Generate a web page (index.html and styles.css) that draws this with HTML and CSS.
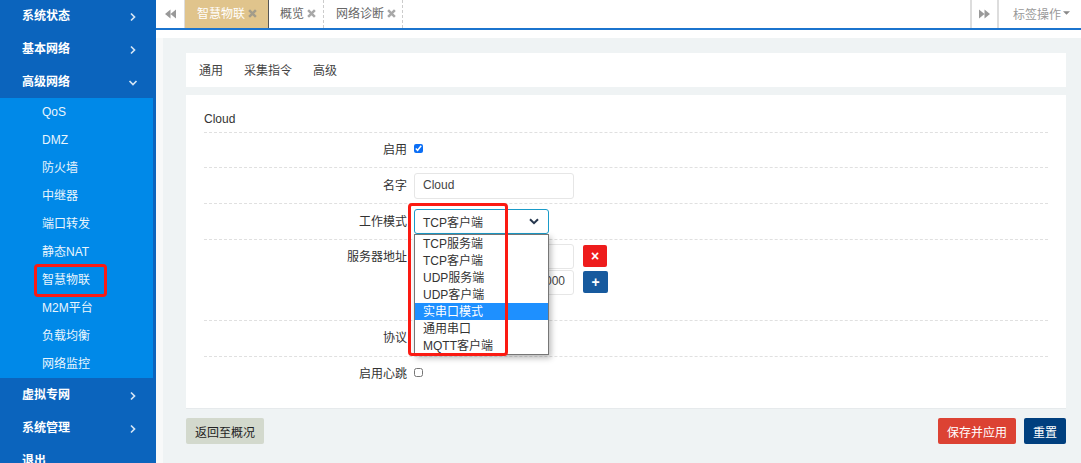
FILE: index.html
```html
<!DOCTYPE html>
<html lang="zh-CN">
<head>
<meta charset="utf-8">
<title>智慧物联</title>
<link rel="stylesheet" href="styles.css">
</head>
<body>
<div class="app">
  <nav class="sidebar">
    <div class="nav-item"><span>系统状态</span><svg class="chev" viewBox="0 0 8 10"><path d="M2 1.5 5.5 5 2 8.5"/></svg></div>
    <div class="nav-item"><span>基本网络</span><svg class="chev" viewBox="0 0 8 10"><path d="M2 1.5 5.5 5 2 8.5"/></svg></div>
    <div class="nav-item"><span>高级网络</span><svg class="chev" viewBox="0 0 10 8"><path d="M1.5 2 5 5.5 8.5 2"/></svg></div>
    <ul class="submenu">
      <li>QoS</li><li>DMZ</li><li>防火墙</li><li>中继器</li><li>端口转发</li><li>静态NAT</li><li>智慧物联</li><li>M2M平台</li><li>负载均衡</li><li>网络监控</li>
    </ul>
    <div class="nav-item"><span>虚拟专网</span><svg class="chev" viewBox="0 0 8 10"><path d="M2 1.5 5.5 5 2 8.5"/></svg></div>
    <div class="nav-item"><span>系统管理</span><svg class="chev" viewBox="0 0 8 10"><path d="M2 1.5 5.5 5 2 8.5"/></svg></div>
    <div class="nav-item"><span>退出</span></div>
    <div class="mark mark-nav"></div>
  </nav>
  <main class="main">
    <header class="tabbar">
      <div class="tab-arrow tab-arrow-left"><svg viewBox="0 0 12 10"><path d="M6 0v10L0 5zM12 0v10L6 5z"/></svg></div>
      <div class="tab tab-active">智慧物联<svg class="close" viewBox="0 0 8 8"><path d="M1 1l6 6M7 1 1 7"/></svg></div>
      <div class="tab tab-plain">概览<svg class="close" viewBox="0 0 8 8"><path d="M1 1l6 6M7 1 1 7"/></svg></div>
      <div class="tab tab-dashed">网络诊断<svg class="close" viewBox="0 0 8 8"><path d="M1 1l6 6M7 1 1 7"/></svg></div>
      <div class="tab-spacer"></div>
      <div class="tab-arrow tab-arrow-right"><svg viewBox="0 0 12 10"><path d="M0 0v10l6-5zM6 0v10l6-5z"/></svg></div>
      <div class="tab-actions">标签操作<svg class="caret" viewBox="0 0 8 4"><path d="M0 0h8L4 4z"/></svg></div>
    </header>
    <div class="page">
      <section class="subtabs"><span>通用</span><span>采集指令</span><span>高级</span></section>
      <section class="panel">
        <div class="panel-title">Cloud</div>
        <div class="row row-check"><label class="lbl">启用</label><input class="check" type="checkbox" checked></div>
        <div class="row row-field"><label class="lbl">名字</label><div class="field field-name">Cloud</div></div>
        <div class="row row-select">
          <label class="lbl">工作模式</label>
          <div class="select">TCP客户端<svg class="select-chev" viewBox="0 0 10 7"><path d="M1 1.2 5 5.2 9 1.2"/></svg></div>
        </div>
        <div class="row row-server">
          <label class="lbl">服务器地址</label>
          <div class="server-lines">
            <div class="server-line"><div class="field field-server"></div><button class="icon-btn btn-del">×</button></div>
            <div class="server-line"><div class="field field-server field-end">000</div><button class="icon-btn btn-add">+</button></div>
          </div>
        </div>
        <div class="row row-proto"><label class="lbl">协议</label></div>
        <div class="row row-last"><label class="lbl">启用心跳</label><input class="check" type="checkbox"></div>
        <ul class="dropdown">
          <li>TCP服务端</li><li>TCP客户端</li><li>UDP服务端</li><li>UDP客户端</li><li class="selected">实串口模式</li><li>通用串口</li><li>MQTT客户端</li>
        </ul>
        <div class="mark mark-select"></div>
      </section>
      <footer class="actions">
        <button class="btn btn-back">返回至概况</button>
        <div class="actions-right">
          <button class="btn btn-save">保存并应用</button>
          <button class="btn btn-reset">重置</button>
        </div>
      </footer>
    </div>
  </main>
</div>
</body>
</html>
```
FILE: styles.css
```css
* { box-sizing: border-box; }
html, body { margin: 0; padding: 0; height: 100%; overflow: hidden; }
body {
  font-family: "Liberation Sans", "Noto Sans CJK SC", sans-serif;
  font-size: 12px;
  color: #333;
  background: #fff;
}
.app { display: flex; height: 463px; overflow: hidden; }

/* sidebar */
.sidebar {
  position: relative;
  flex: 0 0 156px;
  background: #0b64bd;
  margin-top: -1px;
  height: 480px;
  color: #fff;
}
.nav-item {
  height: 33px;
  display: flex;
  align-items: center;
  justify-content: space-between;
  padding: 0 19px 0 22px;
  font-weight: 700;
}
.nav-item span { padding-bottom: 2px; }
.chev { width: 8px; height: 10px; margin-top: 3px; fill: none; stroke: #d5e5f5; stroke-width: 1.7; }
.nav-item:nth-child(3) .chev { width: 10px; height: 8px; margin-right: -1px; }
.submenu {
  list-style: none;
  margin: 0;
  padding: 0;
  width: 153px;
  background: #0089e8;
  color: #e9f5fd;
}
.submenu li { height: 28px; line-height: 29px; padding-left: 42px; }
.mark { position: absolute; border: 3px solid #fb1a12; border-radius: 4px; pointer-events: none; }
.mark-nav { left: 34px; top: 265px; width: 73px; height: 33px; }

/* main */
.main { flex: 1; display: flex; flex-direction: column; min-width: 0; }
.tabbar {
  flex: 0 0 30px;
  display: flex;
  border-bottom: 2px solid #1b74ce;
  color: #666;
}
.tab-arrow { flex: 0 0 29px; display: flex; align-items: center; justify-content: center; padding-bottom: 1px; }
.tab-arrow svg { width: 11px; height: 10px; fill: #999; }
.tab-arrow-left { border-right: 1px solid #ddd; }
.tab-arrow-right { border-left: 2px solid #ddd; border-right: 2px solid #ddd; }
.tab { display: flex; align-items: center; padding-left: 11px; padding-bottom: 3px; gap: 3px; }
.close { width: 9px; height: 9px; margin-top: 1px; fill: none; stroke: #a8a8a8; stroke-width: 2.2; }
.tab-active { width: 84px; background: #e0c48c; color: #fff; padding-left: 12px; border-right: 1px solid #555; }
.tab-active .close { stroke: #a39c8a; }
.tab-plain { width: 55px; padding-left: 11px; border-right: 1px dashed #ccc; }
.tab-dashed { width: 79px; padding-left: 12px; border-right: 1px dashed #ccc; }
.tab-spacer { flex: 1; }
.tab-actions { flex: 0 0 82px; display: flex; align-items: center; padding: 0 0 2px 14px; gap: 2px; color: #999; }
.caret { width: 7px; height: 4px; fill: #888; }

.page {
  flex: 1;
  margin-top: 8px;
  border-left: 7px solid #f8f9f9;
  background: #eff3f4;
  padding: 15px 15px 0 23px;
  min-height: 0;
}
.subtabs {
  height: 34px;
  background: #fff;
  display: flex;
  align-items: center;
  gap: 21px;
  padding: 0 0 2px 13px;
  color: #444;
}
.panel {
  position: relative;
  margin-top: 8px;
  height: 314px;
  background: #fff;
  padding: 0 18px;
  border-bottom: 1px solid #e6eaec;
}
.panel-title {
  height: 38px;
  padding-top: 17px;
  line-height: 15px;
  border-bottom: 1px dashed #e0e0e0;
  color: #333;
}
.row {
  display: flex;
  align-items: center;
  border-bottom: 1px dashed #e0e0e0;
}
.lbl { flex: 0 0 203px; padding-bottom: 2px; text-align: right; margin-right: 7px; color: #333; }
.row-check { height: 35px; }
.row-check .lbl, .row-proto .lbl, .row-last .lbl { padding-bottom: 4px; }
.check { margin: 0 0 4px; width: 9px; height: 9px; accent-color: #0b6ef5; }
.row-field, .row-select { height: 36px; }
.row-server { height: 81px; padding-top: 3px; align-items: flex-start; }
.row-server .lbl { line-height: 28px; padding-bottom: 0; }
.row-proto { height: 36px; }
.row-last { height: 35px; border-bottom: 0; }
.field {
  width: 160px;
  height: 26px;
  border: 1px solid #e6e6e6;
  border-radius: 3px;
  padding: 0 8px 2px;
  display: flex;
  align-items: center;
  color: #444;
}
.field-end { justify-content: flex-end; }
.select {
  width: 135px;
  height: 25px;
  border: 1px solid #1a9bc9;
  border-radius: 3px;
  padding: 0 8px 1px;
  display: flex;
  align-items: center;
  justify-content: space-between;
  color: #333;
}
.select-chev { width: 10px; height: 7px; fill: none; stroke: #26364d; stroke-width: 2; margin-right: 1px; }
.server-lines { display: flex; flex-direction: column; }
.server-line { display: flex; align-items: center; gap: 9px; height: 26px; }
.field-server { height: 25px; }
.icon-btn {
  height: 22px;
  padding: 0;
  border: 0;
  border-radius: 2px;
  color: #fff;
  font: 700 14px/22px "Liberation Sans", sans-serif;
}
.btn-del { width: 24px; background: #ee1c1c; }
.btn-add { width: 25px; background: #175a9e; }
.dropdown {
  position: absolute;
  left: 228px;
  top: 139px;
  width: 135px;
  margin: 0;
  padding: 0;
  list-style: none;
  background: #fff;
  border: 1px solid #767676;
  box-shadow: 2px 3px 6px rgba(0,0,0,.28);
  color: #333;
}
.dropdown li { height: 17px; line-height: 18px; padding-left: 8px; }
.dropdown .selected { background: #1e90ff; color: #fff; }
.mark-select { left: 222px; top: 108px; width: 100px; height: 153px; }

.actions { display: flex; justify-content: space-between; margin-top: 9px; }
.actions-right { display: flex; gap: 8px; }
.btn {
  height: 26px;
  border: 0;
  border-radius: 2px;
  font: 12px "Liberation Sans", "Noto Sans CJK SC", sans-serif;
  padding: 0;
}
.btn-back { width: 78px; background: #d3d9cd; color: #222; }
.btn-save { width: 78px; background: #dc4233; color: #fff; }
.btn-reset { width: 42px; background: #003f7e; color: #fff; }
```
